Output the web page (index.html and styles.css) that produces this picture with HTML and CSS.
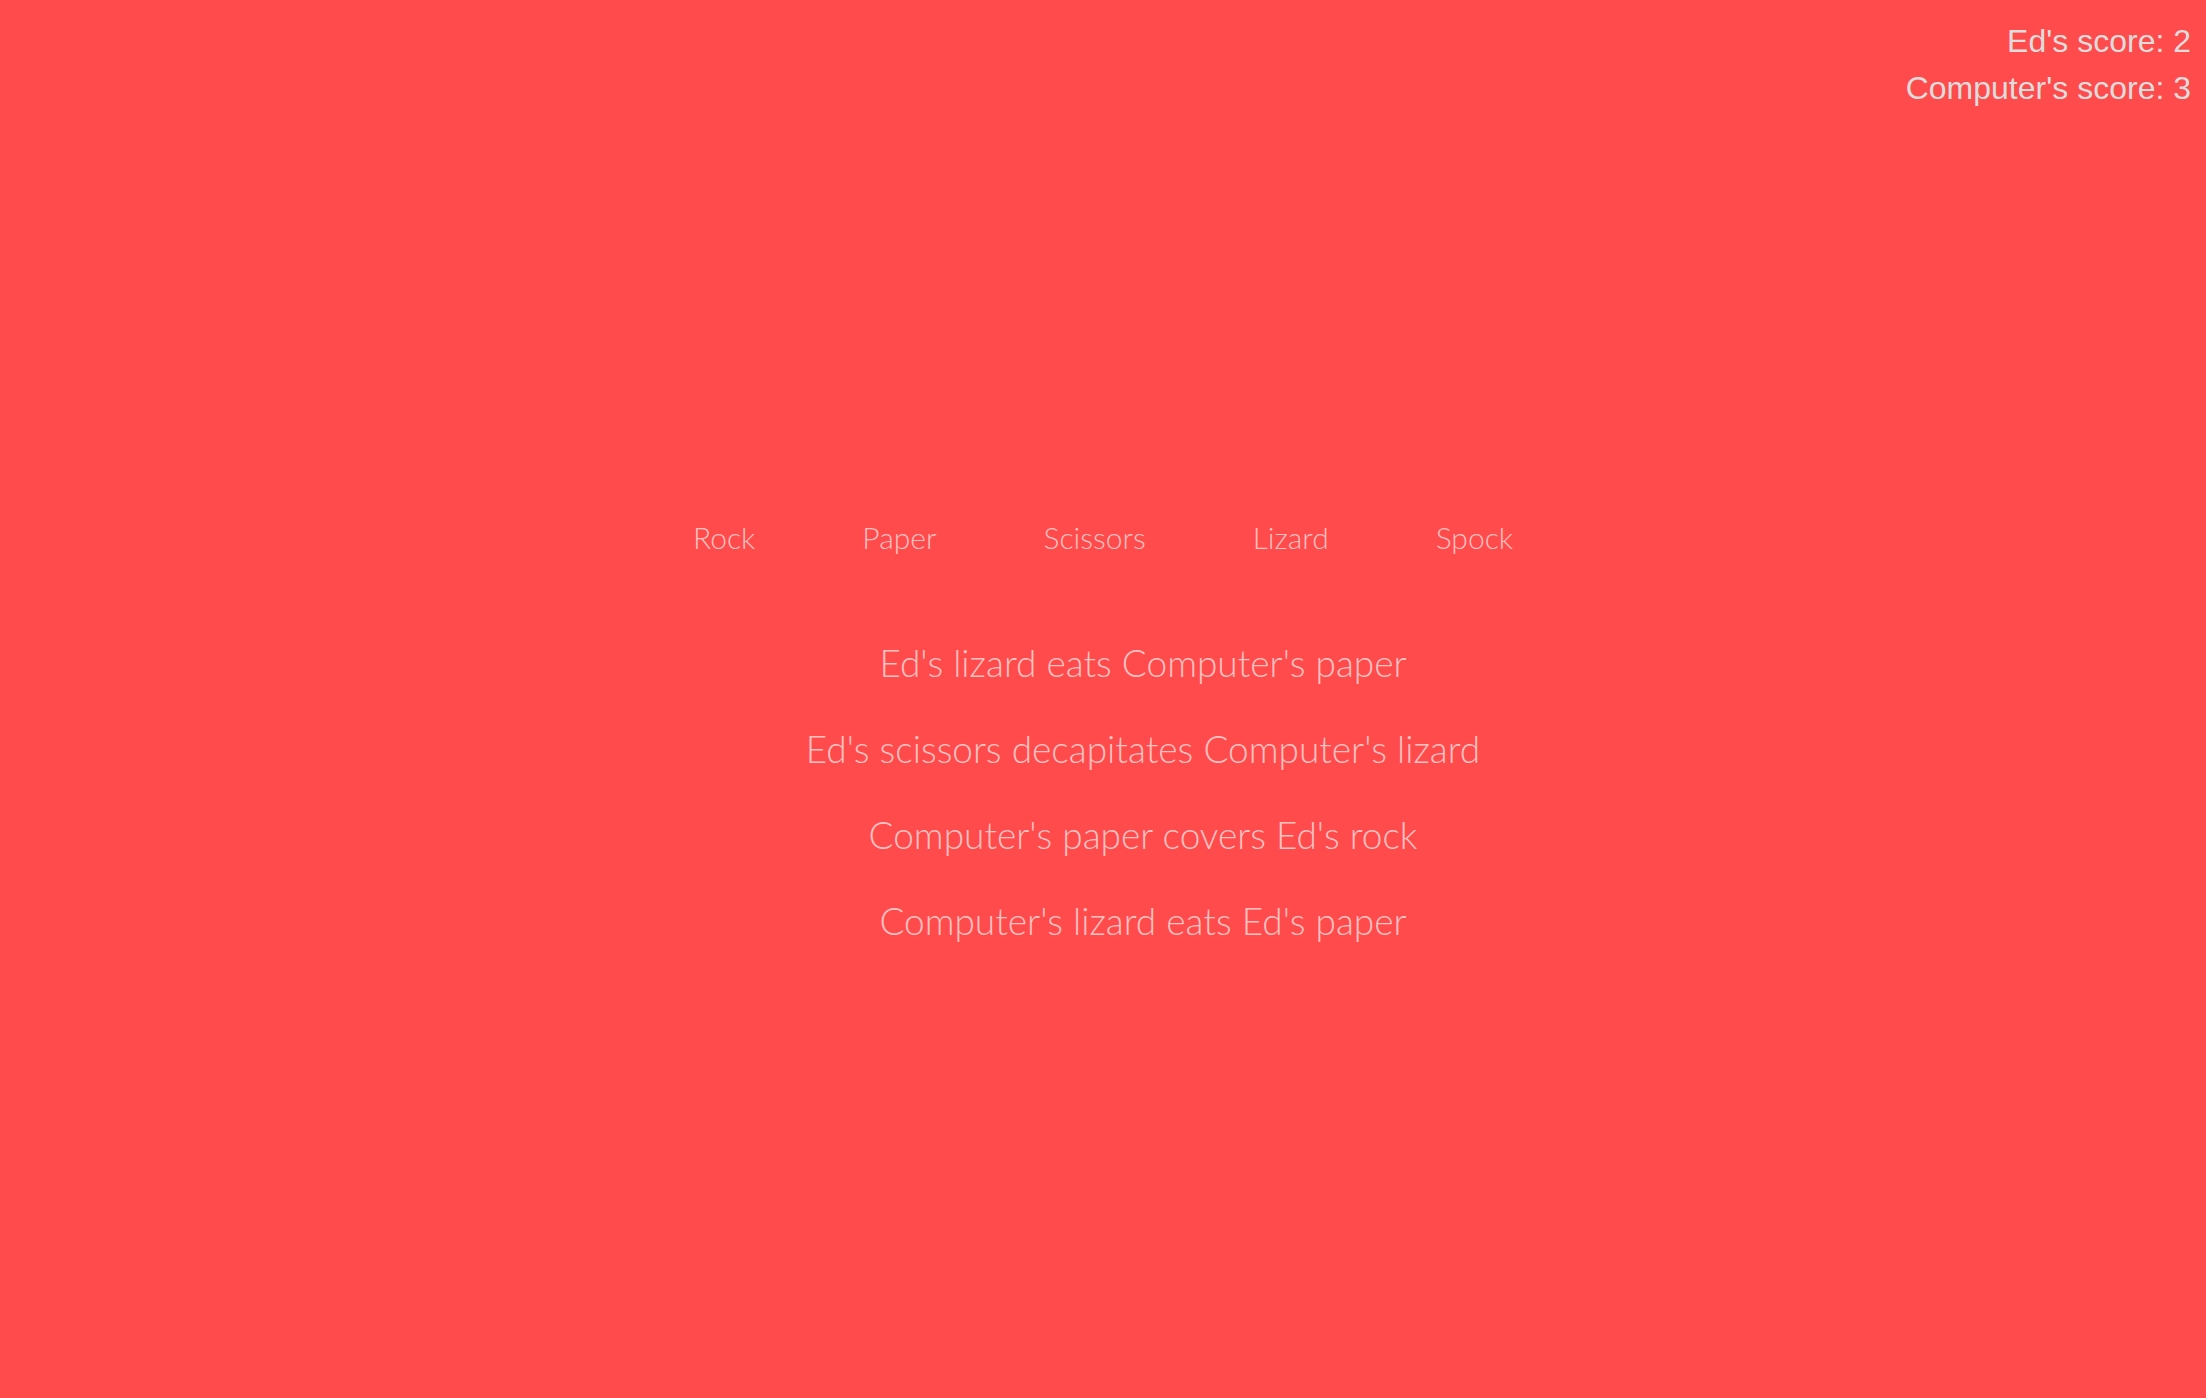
FILE: index.html
```html
<!DOCTYPE html>
<html lang="en">
<head>
<meta charset="utf-8">
<title>Rock Paper Scissors Lizard Spock</title>
<link rel="stylesheet" href="styles.css">
</head>
<body>
<div class="scores">
  <div class="score">Ed's score: 2</div>
  <div class="score">Computer's score: 3</div>
</div>
<div class="choices">
  <span class="choice">Rock</span>
  <span class="choice">Paper</span>
  <span class="choice">Scissors</span>
  <span class="choice">Lizard</span>
  <span class="choice">Spock</span>
</div>
<ul class="results">
  <li>Ed's lizard eats Computer's paper</li>
  <li>Ed's scissors decapitates Computer's lizard</li>
  <li>Computer's paper covers Ed's rock</li>
  <li>Computer's lizard eats Ed's paper</li>
</ul>
</body>
</html>
```
FILE: styles.css
```css
html, body {
  margin: 0;
  padding: 0;
  height: 100%;
}
body {
  background: #ff4b4b;
  font-family: "Lato", "Open Sans", sans-serif;
}
.scores {
  padding: 18px 15px 0 0;
  text-align: right;
  font-family: "Liberation Sans", Arial, sans-serif;
  font-size: 32px;
  line-height: 47px;
  color: #dcdcdc;
}
.choices {
  margin-top: 405px;
  display: flex;
  justify-content: center;
  gap: 107px;
  font-size: 30px;
  font-weight: 300;
  line-height: 40px;
  color: #ffc2c2;
}
.results {
  list-style: none;
  margin: 63px 0 0 0;
  padding: 0 0 0 80px;
  text-align: center;
  font-size: 37px;
  font-weight: 300;
  line-height: 86px;
  color: #ffc2c2;
}
```
